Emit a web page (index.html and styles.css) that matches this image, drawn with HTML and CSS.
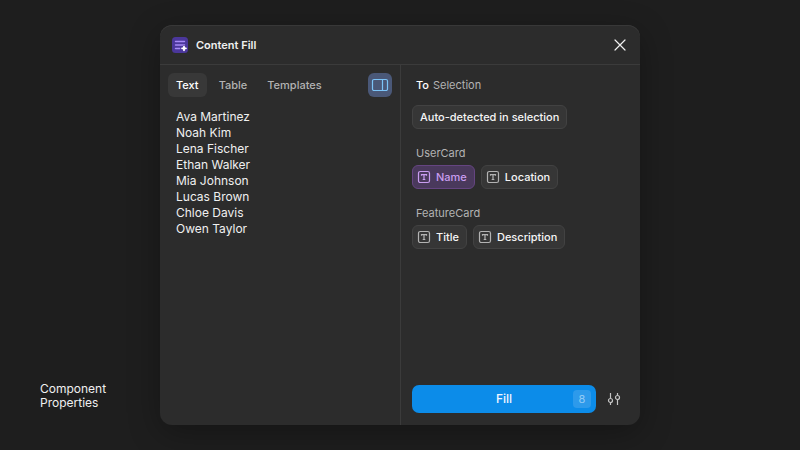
FILE: index.html
```html
<!DOCTYPE html>
<html lang="en">
<head>
<meta charset="utf-8">
<meta name="viewport" content="width=device-width, initial-scale=1">
<title>Content Fill</title>
<link rel="stylesheet" href="styles.css">
</head>
<body>
<svg class="sprite" aria-hidden="true">
  <symbol id="text-icon" viewBox="0 0 14 14">
    <rect x="1.5" y="1.5" width="11" height="11" rx="1.8" fill="none" stroke="currentColor" stroke-width="1.2"/>
    <path d="M4.5 5.8V4.6h5v1.2M7 4.6v4.9M5.7 9.5h2.6" fill="none" stroke="currentColor" stroke-width="1.2"/>
  </symbol>
</svg>
<main class="stage">
  <p class="caption">Component Properties</p>
  <section class="dialog" role="dialog" aria-labelledby="dialog-title">
    <header class="dialog-header">
      <svg class="logo" viewBox="0 0 16 16" aria-hidden="true">
        <rect width="16" height="16" rx="3.5" fill="#4b379b"/>
        <path d="M3.5 4.5h9M3.5 8h9M3.5 11.5h4.5" stroke="#a78bf6" stroke-width="1.4" stroke-linecap="round"/>
        <path d="M12 8.8l.8 1.8 1.8.8-1.8.8-.8 1.8-.8-1.8-1.8-.8 1.8-.8z" fill="#fff" stroke="#4b379b" stroke-width="2" stroke-linejoin="round" paint-order="stroke"/>
        <path d="M12 9.4v4M10 11.4h4" stroke="#fff" stroke-width="1.6" stroke-linecap="round"/>
      </svg>
      <h1 class="title" id="dialog-title">Content Fill</h1>
      <button class="icon-button close" type="button" aria-label="Close">
        <svg viewBox="0 0 12 12"><path d="M1 1l10 10M11 1L1 11" stroke="currentColor" stroke-width="1.2" stroke-linecap="round"/></svg>
      </button>
    </header>
    <div class="panels">
      <div class="source">
        <nav class="toolbar">
          <button class="tab tab-active" type="button">Text</button>
          <button class="tab" type="button">Table</button>
          <button class="tab" type="button">Templates</button>
          <button class="icon-button panel-toggle" type="button" aria-label="Toggle panel">
            <svg viewBox="0 0 18 14"><path d="M3 1.5h12a1.5 1.5 0 0 1 1.5 1.5v8a1.5 1.5 0 0 1-1.5 1.5H3A1.5 1.5 0 0 1 1.5 11V3A1.5 1.5 0 0 1 3 1.5zM11.5 1.5v11" fill="none" stroke="currentColor" stroke-width="1.2"/></svg>
          </button>
        </nav>
        <textarea class="content" aria-label="Content" rows="8" spellcheck="false">Ava Martinez
Noah Kim
Lena Fischer
Ethan Walker
Mia Johnson
Lucas Brown
Chloe Davis
Owen Taylor</textarea>
      </div>
      <div class="target">
        <h2 class="heading heading-row"><span class="heading-to">To</span> <span>Selection</span></h2>
        <div class="chips"><button class="chip" type="button">Auto-detected in selection</button></div>
        <h3 class="heading heading-group">UserCard</h3>
        <div class="chips">
          <button class="chip chip-icon chip-selected" type="button"><svg aria-hidden="true"><use href="#text-icon"/></svg>Name</button>
          <button class="chip chip-icon" type="button"><svg aria-hidden="true"><use href="#text-icon"/></svg>Location</button>
        </div>
        <h3 class="heading heading-group">FeatureCard</h3>
        <div class="chips">
          <button class="chip chip-icon" type="button"><svg aria-hidden="true"><use href="#text-icon"/></svg>Title</button>
          <button class="chip chip-icon" type="button"><svg aria-hidden="true"><use href="#text-icon"/></svg>Description</button>
        </div>
        <footer class="actions">
          <button class="fill" type="button"><span class="fill-label">Fill</span><span class="count">8</span></button>
          <button class="icon-button settings" type="button" aria-label="Settings">
            <svg viewBox="0 0 14 14"><path d="M3.5 1v5M3.5 10v3M10.5 1v2M10.5 7v6" stroke="currentColor" stroke-width="1.2"/><circle cx="3.5" cy="8.5" r="2" fill="none" stroke="currentColor" stroke-width="1.2"/><circle cx="10.5" cy="5.5" r="2" fill="none" stroke="currentColor" stroke-width="1.2"/></svg>
          </button>
        </footer>
      </div>
    </div>
  </section>
</main>
</body>
</html>
```
FILE: styles.css
```css
* {
  box-sizing: border-box;
}

body {
  margin: 0;
  background: #1e1e1e;
  color: #f0f0f0;
  font: 400 12px/16px Inter, "Liberation Sans", sans-serif;
}

h1, h2, h3, p {
  margin: 0;
  font: inherit;
}

button, textarea {
  margin: 0;
  padding: 0;
  border: 0;
  background: none;
  color: inherit;
  font: inherit;
}

button {
  cursor: pointer;
}

.sprite {
  display: none;
}

.stage {
  display: grid;
  grid-template-columns: 1fr 3fr 1fr;
  min-height: 100vh;
  padding: 25px 0;
}

.caption {
  align-self: end;
  padding: 0 32px 15px 40px;
  line-height: 14px;
}

.dialog {
  display: flex;
  flex-direction: column;
  border-radius: 12px;
  background: #2c2c2c;
  box-shadow: inset 0 1px 0 #383838, 0 8px 32px rgba(0, 0, 0, 0.3);
}

.dialog-header {
  display: flex;
  align-items: center;
  gap: 8px;
  height: 40px;
  padding: 0 8px 0 12px;
  border-bottom: 1px solid #3b3b3b;
}

.logo {
  width: 16px;
  height: 16px;
}

.title {
  font-size: 11px;
  font-weight: 600;
}

.icon-button {
  display: grid;
  place-items: center;
  width: 24px;
  height: 24px;
  border-radius: 6px;
}

.close {
  margin-left: auto;
}

.close svg {
  width: 12px;
  height: 12px;
}

.panels {
  display: grid;
  grid-template-columns: 1fr 1fr;
  flex: 1;
}

.source {
  display: flex;
  flex-direction: column;
  gap: 12px;
  padding: 8px 8px 12px;
}

.toolbar {
  display: flex;
  gap: 4px;
}

.tab {
  height: 24px;
  padding: 0 8px;
  border-radius: 6px;
  color: #b3b3b3;
  font-size: 11px;
  font-weight: 450;
}

.tab-active {
  background: #383838;
  color: #fff;
}

.panel-toggle {
  margin-left: auto;
  background: #4a5878;
  color: #7cc4f8;
}

.panel-toggle svg {
  width: 18px;
  height: 14px;
}

.content {
  flex: 1;
  padding: 0 8px;
  outline: 0;
  resize: none;
}

.target {
  display: flex;
  flex-direction: column;
  padding: 12px 11px;
  border-left: 1px solid #3b3b3b;
}

.heading {
  padding: 0 4px;
  color: #b3b3b3;
  font-size: 11px;
  font-weight: 400;
}

.heading-row {
  display: flex;
  gap: 4px;
}

.heading-to {
  color: #fff;
  font-weight: 450;
}

.heading-group {
  margin-top: 16px;
}

.chips {
  display: flex;
  flex-wrap: wrap;
  gap: 6px;
  margin-top: 4px;
}

.heading-row + .chips {
  margin-top: 12px;
}

.chip {
  display: flex;
  align-items: center;
  gap: 5px;
  height: 24px;
  padding: 0 7px;
  border: 1px solid #424242;
  border-radius: 6px;
  background: #363636;
  color: #f5f5f5;
  font-size: 11px;
  font-weight: 450;
}

.chip-icon {
  padding-left: 4px;
}

.chip svg {
  width: 14px;
  height: 14px;
  color: #b3b3b3;
}

.chip-selected {
  border-color: #654581;
  background: #4a395c;
  color: #c99df0;
}

.chip-selected svg {
  color: #c99df0;
}

.actions {
  display: flex;
  align-items: center;
  gap: 6px;
  margin-top: auto;
  padding-right: 3px;
}

.fill {
  display: grid;
  grid-template-columns: 1fr auto 1fr;
  align-items: center;
  flex: 1;
  height: 28px;
  padding: 0 5px;
  border-radius: 7px;
  background: #0c8ce9;
  color: #f0f6ff;
  font-weight: 500;
}

.fill-label {
  grid-column: 2;
}

.count {
  justify-self: end;
  width: 18px;
  border-radius: 4px;
  background: #2d9aeb;
  color: #92caf5;
  font-size: 11px;
  font-weight: 400;
  line-height: 18px;
}

.settings {
  color: #c4c4c4;
}

.settings svg {
  width: 14px;
  height: 14px;
}
```
